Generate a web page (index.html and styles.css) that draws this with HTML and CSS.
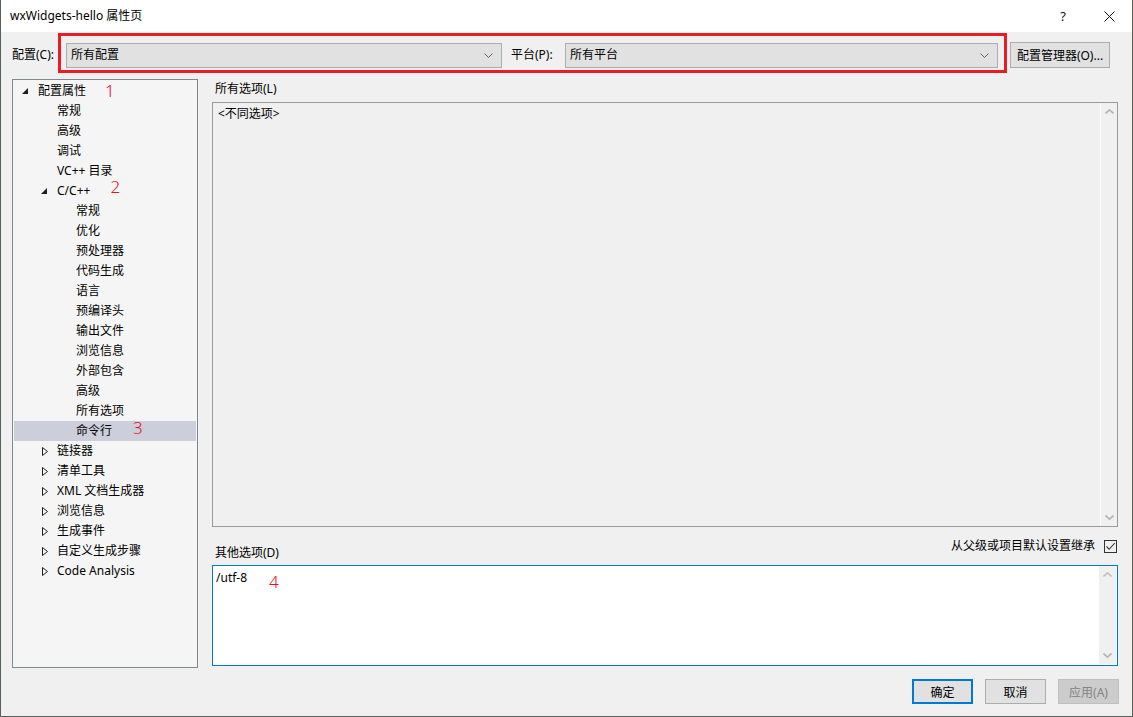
FILE: index.html
```html
<!DOCTYPE html>
<html lang="zh-CN">
<head>
<meta charset="utf-8">
<title>wxWidgets-hello 属性页</title>
<link rel="stylesheet" href="styles.css">
</head>
<body>
<div class="window">
  <div class="titlebar">
    <span class="title">wxWidgets-hello 属性页</span>
    <div class="title-btns">
      <span class="tbtn help">?</span>
      <span class="tbtn close">
        <svg width="11" height="11" viewBox="0 0 11 11"><path d="M0.5 0.5L10.5 10.5M10.5 0.5L0.5 10.5" stroke="#111" stroke-width="1" fill="none"/></svg>
      </span>
    </div>
  </div>

  <div class="toolbar">
    <span class="lbl lbl-config">配置(C):</span>
    <div class="combo combo-config">
      <span class="combo-text">所有配置</span>
      <svg class="chev" width="9" height="5" viewBox="0 0 9 5"><path d="M0.5 0.5L4.5 4.5L8.5 0.5" stroke="#606060" fill="none"/></svg>
    </div>
    <span class="lbl lbl-platform">平台(P):</span>
    <div class="combo combo-platform">
      <span class="combo-text">所有平台</span>
      <svg class="chev" width="9" height="5" viewBox="0 0 9 5"><path d="M0.5 0.5L4.5 4.5L8.5 0.5" stroke="#606060" fill="none"/></svg>
    </div>
    <button class="btn btn-manager">配置管理器(O)...</button>
    <div class="red-box"></div>
  </div>

  <div class="main">
    <div class="tree">
      <div class="row l0"><span class="tog"><svg width="6" height="6" viewBox="0 0 6 6"><path d="M6 0L6 6L0 6Z" fill="#1e1e1e"/></svg></span><span>配置属性</span><span class="mark mark1">1</span></div>
      <div class="row l1leaf">常规</div>
      <div class="row l1leaf">高级</div>
      <div class="row l1leaf">调试</div>
      <div class="row l1leaf">VC++ 目录</div>
      <div class="row l1"><span class="tog"><svg width="6" height="6" viewBox="0 0 6 6"><path d="M6 0L6 6L0 6Z" fill="#1e1e1e"/></svg></span><span>C/C++</span><span class="mark mark2">2</span></div>
      <div class="row l2">常规</div>
      <div class="row l2">优化</div>
      <div class="row l2">预处理器</div>
      <div class="row l2">代码生成</div>
      <div class="row l2">语言</div>
      <div class="row l2">预编译头</div>
      <div class="row l2">输出文件</div>
      <div class="row l2">浏览信息</div>
      <div class="row l2">外部包含</div>
      <div class="row l2">高级</div>
      <div class="row l2">所有选项</div>
      <div class="row l2 selected"><span>命令行</span><span class="mark mark3">3</span></div>
      <div class="row l1"><span class="tog col"><svg width="6" height="9" viewBox="0 0 6 9"><path d="M0.5 0.5L5.5 4.5L0.5 8.5Z" fill="none" stroke="#1e1e1e"/></svg></span><span>链接器</span></div>
      <div class="row l1"><span class="tog col"><svg width="6" height="9" viewBox="0 0 6 9"><path d="M0.5 0.5L5.5 4.5L0.5 8.5Z" fill="none" stroke="#1e1e1e"/></svg></span><span>清单工具</span></div>
      <div class="row l1"><span class="tog col"><svg width="6" height="9" viewBox="0 0 6 9"><path d="M0.5 0.5L5.5 4.5L0.5 8.5Z" fill="none" stroke="#1e1e1e"/></svg></span><span>XML 文档生成器</span></div>
      <div class="row l1"><span class="tog col"><svg width="6" height="9" viewBox="0 0 6 9"><path d="M0.5 0.5L5.5 4.5L0.5 8.5Z" fill="none" stroke="#1e1e1e"/></svg></span><span>浏览信息</span></div>
      <div class="row l1"><span class="tog col"><svg width="6" height="9" viewBox="0 0 6 9"><path d="M0.5 0.5L5.5 4.5L0.5 8.5Z" fill="none" stroke="#1e1e1e"/></svg></span><span>生成事件</span></div>
      <div class="row l1"><span class="tog col"><svg width="6" height="9" viewBox="0 0 6 9"><path d="M0.5 0.5L5.5 4.5L0.5 8.5Z" fill="none" stroke="#1e1e1e"/></svg></span><span>自定义生成步骤</span></div>
      <div class="row l1"><span class="tog col"><svg width="6" height="9" viewBox="0 0 6 9"><path d="M0.5 0.5L5.5 4.5L0.5 8.5Z" fill="none" stroke="#1e1e1e"/></svg></span><span>Code Analysis</span></div>
    </div>

    <div class="pane">
      <div class="pane-label top-label">所有选项(L)</div>
      <div class="textbox box-all">
        <div class="tb-content">&lt;不同选项&gt;</div>
        <div class="scroll scroll-grey">
          <span class="arr"><svg width="9" height="5" viewBox="0 0 9 5"><path d="M0.5 4.5L4.5 0.8L8.5 4.5" stroke="#b4b4b4" stroke-width="1.6" fill="none"/></svg></span>
          <span class="arr"><svg width="9" height="5" viewBox="0 0 9 5"><path d="M0.5 0.5L4.5 4.2L8.5 0.5" stroke="#b4b4b4" stroke-width="1.6" fill="none"/></svg></span>
        </div>
      </div>
      <div class="mid-row">
        <span class="pane-label other-label">其他选项(D)</span>
        <label class="inherit">
          <span>从父级或项目默认设置继承</span>
          <span class="check"><svg width="11" height="11" viewBox="0 0 11 11"><path d="M1.5 5.5L4.2 8.3L9.8 2" stroke="#333" stroke-width="1.1" fill="none"/></svg></span>
        </label>
      </div>
      <div class="textbox box-other">
        <div class="tb-content"><span>/utf-8</span><span class="mark mark4">4</span></div>
        <div class="scroll scroll-light">
          <span class="arr"><svg width="9" height="5" viewBox="0 0 9 5"><path d="M0.5 4.5L4.5 0.8L8.5 4.5" stroke="#c2c2c2" stroke-width="1.6" fill="none"/></svg></span>
          <span class="arr"><svg width="9" height="5" viewBox="0 0 9 5"><path d="M0.5 0.5L4.5 4.2L8.5 0.5" stroke="#b4b4b4" stroke-width="1.6" fill="none"/></svg></span>
        </div>
      </div>
    </div>
  </div>

  <div class="footer">
    <button class="btn btn-ok">确定</button>
    <button class="btn btn-cancel">取消</button>
    <button class="btn btn-apply" disabled>应用(A)</button>
  </div>
</div>
</body>
</html>
```

FILE: styles.css
```css
* { box-sizing: border-box; }

html, body {
  margin: 0;
  padding: 0;
  width: 1133px;
  height: 717px;
  overflow: hidden;
  background: #f0f0f0;
}

body {
  font-family: "Noto Sans", "Noto Sans CJK SC", sans-serif;
  font-size: 12px;
  line-height: 16px;
  color: #000;
}

.window {
  width: 1133px;
  height: 717px;
  background: #f0f0f0;
  border-left: 1px solid #56625a;
  border-right: 1px solid #56625a;
  border-bottom: 1px solid #56625a;
  display: flex;
  flex-direction: column;
}

/* title bar */
.titlebar {
  height: 32px;
  flex: none;
  background: #fff;
  display: flex;
  align-items: center;
  padding-left: 9px;
}

.title {
  font-size: 12px;
  color: #000;
}

.title-btns {
  margin-left: auto;
  display: flex;
  height: 32px;
}

.tbtn {
  width: 46px;
  height: 32px;
  display: flex;
  align-items: center;
  justify-content: center;
}

.help {
  font-size: 13px;
  color: #111;
}

/* toolbar */
.toolbar {
  position: relative;
  height: 42px;
  flex: none;
  display: flex;
  align-items: center;
  padding: 4px 0 0 11px;
}

.lbl {
  flex: none;
}

.lbl-config { width: 54px; }
.lbl-platform { width: 54px; margin-left: 9px; }

.combo {
  height: 25px;
  background: #e1e1e1;
  border: 1px solid #adadad;
  display: flex;
  align-items: center;
  padding: 0 8px 0 4px;
  flex: none;
}

.combo-config { width: 436px; }
.combo-platform { width: 433px; }

.combo-text { flex: 1; }

.chev { flex: none; }

.btn {
  font-family: inherit;
  font-size: 12px;
  color: #000;
  height: 25px;
  background: #e1e1e1;
  border: 1px solid #adadad;
  padding: 0;
  margin: 0;
  flex: none;
}

.btn-manager {
  width: 100px;
  height: 26px;
  margin-left: 12px;
  margin-top: -1px;
}

.red-box {
  position: absolute;
  left: 57px;
  top: 1px;
  width: 949px;
  height: 40px;
  border: 3px solid #ed1c24;
  pointer-events: none;
}

/* main */
.main {
  flex: none;
  height: 594px;
  display: flex;
  padding: 5px 0 0 11px;
}

.tree {
  width: 186px;
  height: 589px;
  flex: none;
  background: #f5f5f5;
  border: 1px solid #828790;
  padding: 1px 1px 0;
}

.row {
  height: 20px;
  display: flex;
  align-items: center;
  white-space: nowrap;
}

.row.l0 { padding-left: 6px; }
.row.l1 { padding-left: 25px; }
.row.l1leaf { padding-left: 43px; }
.row.l2 { padding-left: 62px; }

.row.selected { background: #cccedb; }

.tog {
  width: 16px;
  margin-right: 2px;
  display: flex;
  align-items: center;
  padding-left: 2px;
  flex: none;
}

.tog.col { padding-left: 3px; }

.mark {
  color: #e81123;
  font-size: 17px;
  line-height: 20px;
  font-weight: 300;
}

.mark1 { margin-left: 19px; }
.mark2 { margin-left: 20px; margin-top: -8px; }
.mark3 { margin-left: 21px; margin-top: -6px; }
.mark4 { margin-left: 22px; margin-top: 2px; }

/* right pane */
.pane {
  width: 906px;
  margin-left: 14px;
  display: flex;
  flex-direction: column;
  flex: none;
}

.pane-label {
  padding-left: 3px;
}

.top-label {
  height: 23px;
  padding-top: 2px;
}

.textbox {
  display: flex;
  flex: none;
}

.box-all {
  height: 425px;
  border: 1px solid #9a9a9a;
  background: #f0f0f0;
}

.box-other {
  height: 101px;
  border: 1px solid #0078d7;
  background: #fff;
}

.tb-content {
  flex: 1;
  padding: 3px 5px;
  display: flex;
  align-items: flex-start;
}

.box-other .tb-content { padding: 4px 3px; }

.scroll {
  width: 17px;
  flex: none;
  display: flex;
  flex-direction: column;
  justify-content: space-between;
}

.scroll-grey {
  border-left: 1px solid #fbfbfb;
  background: #f0f0f0;
}

.scroll-light {
  background: #f0f0f0;
  margin: 0 1px 1px 0;
}

.arr {
  height: 17px;
  display: flex;
  align-items: center;
  justify-content: center;
}

.mid-row {
  height: 38px;
  display: flex;
  justify-content: space-between;
  align-items: flex-start;
  flex: none;
}

.other-label {
  margin-top: 18px;
}

.inherit {
  display: flex;
  align-items: center;
  margin-top: 11px;
  gap: 9px;
}

.check {
  width: 13px;
  height: 13px;
  border: 1px solid #333;
  display: flex;
  align-items: center;
  justify-content: center;
  margin-right: 1px;
}

/* footer */
.footer {
  flex: 1;
  display: flex;
  justify-content: flex-end;
  align-items: flex-start;
  gap: 12px;
  padding: 11px 13px 0 0;
}

.footer .btn {
  width: 61px;
  height: 25px;
}

.btn-ok {
  border: 2px solid #0078d7;
}

.btn-apply {
  background: #cccccc;
  border-color: #bfbfbf;
  color: #838383;
}
```
